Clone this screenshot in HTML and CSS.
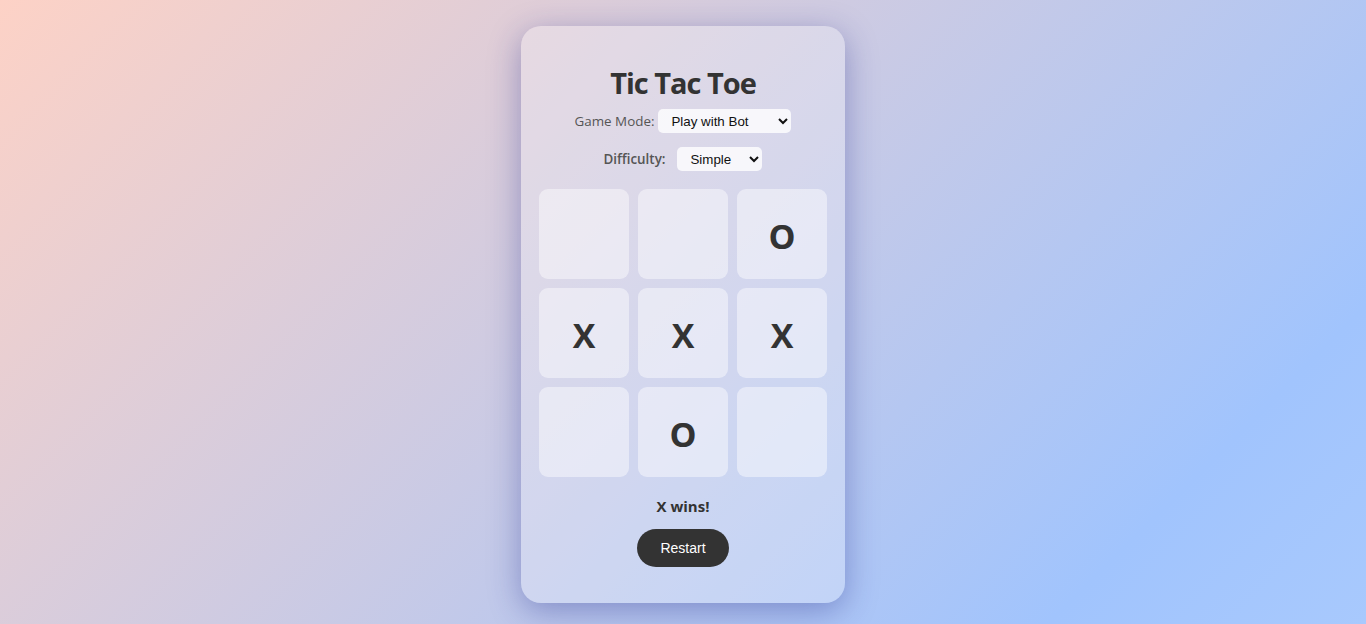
FILE: index.html
```html
<!DOCTYPE html>
<html lang="en">
<head>
<meta charset="utf-8">
<title>Tic Tac Toe</title>
<link rel="stylesheet" href="styles.css">
</head>
<body>
  <main class="card">
    <h1 class="title">Tic Tac Toe</h1>
    <div class="row">
      <label class="label" for="mode">Game Mode:</label>
      <select id="mode" class="select select-mode">
        <option>Play with Bot</option>
        <option>Two Players</option>
      </select>
    </div>
    <div class="row">
      <label class="label label-bold" for="diff">Difficulty:</label>
      <select id="diff" class="select select-diff">
        <option>Simple</option>
        <option>Hard</option>
      </select>
    </div>
    <div class="board">
      <div class="cell"></div>
      <div class="cell"></div>
      <div class="cell">O</div>
      <div class="cell">X</div>
      <div class="cell">X</div>
      <div class="cell">X</div>
      <div class="cell"></div>
      <div class="cell">O</div>
      <div class="cell"></div>
    </div>
    <p class="status">X wins!</p>
    <button class="restart">Restart</button>
  </main>
</body>
</html>
```
FILE: styles.css
```css
* { box-sizing: border-box; }
html, body { height: 100%; }
body {
  margin: 0;
  font-family: "Segoe UI", "Open Sans", "Noto Sans", sans-serif;
  background: linear-gradient(135deg, #fdd2c6 0%, #a1c4fd 84%, #a8c9fd 100%);
  display: flex;
  justify-content: center;
  align-items: flex-start;
  color: #333;
}
.card {
  margin-top: 26px;
  width: 324px;
  height: 577px;
  padding: 38px 18px 0;
  border-radius: 20px;
  background: rgba(255, 255, 255, 0.25);
  box-shadow: 0 8px 32px rgba(31, 38, 135, 0.37);
  display: flex;
  flex-direction: column;
  align-items: center;
}
.title {
  margin: 0;
  font-size: 29px;
  line-height: 38px;
  letter-spacing: -1px;
  font-weight: 700;
  color: #333;
}
.row {
  display: flex;
  align-items: center;
  justify-content: center;
  height: 24px;
}
.row:first-of-type { margin-top: 7px; }
.row + .row { margin-top: 14px; }
.label {
  font-size: 13.4px;
  color: #555;
  margin-right: 4px;
}
.label-bold {
  font-weight: 600;
  margin-right: 12px;
}
.select {
  font-family: "Liberation Sans", Arial, sans-serif;
  font-size: 13.333px;
  color: #111;
  height: 24px;
  border: none;
  border-radius: 5px;
  background-color: rgba(255, 255, 255, 0.8);
  padding: 0 6px 0 9px;
}
.select-mode { width: 133px; }
.select-diff { width: 85px; }
.board {
  margin-top: 18px;
  display: grid;
  grid-template-columns: repeat(3, 90px);
  grid-auto-rows: 90px;
  gap: 9px;
}
.cell {
  border-radius: 9px;
  background: rgba(255, 255, 255, 0.45);
  display: flex;
  align-items: center;
  justify-content: center;
  font-size: 34px;
  font-weight: 700;
  color: #333;
  padding-top: 4px;
}
.status {
  margin: 19px 0 0;
  font-size: 15px;
  line-height: 20px;
  font-weight: 700;
  color: #333;
}
.restart {
  margin-top: 13px;
  width: 92px;
  height: 38px;
  border: none;
  border-radius: 19px;
  background: #333;
  color: #fff;
  font-family: "Liberation Sans", Arial, sans-serif;
  font-size: 14px;
}
```
